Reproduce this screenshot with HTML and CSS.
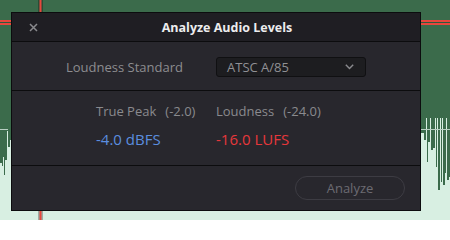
FILE: index.html
```html
<!DOCTYPE html>
<html>
<head>
<meta charset="utf-8">
<link rel="stylesheet" href="styles.css">
</head>
<body>
<svg class="backdrop" width="450" height="220" viewBox="0 0 450 220">
  <rect width="450" height="220" fill="#d8efe2"/>
  <rect width="450" height="118" fill="#3b6b4b"/>
  <g fill="#3b6b4b">
    <rect x="0" y="117" width="2" height="46"/>
    <rect x="2" y="117" width="1" height="49"/>
    <rect x="3" y="117" width="1" height="40"/>
    <rect x="4" y="117" width="1" height="58"/>
    <rect x="5" y="117" width="2" height="43"/>
    <rect x="7" y="117" width="1" height="14"/>
    <rect x="8" y="117" width="2" height="30"/>
    <rect x="10" y="117" width="2" height="23"/>
    <rect x="421" y="117" width="3" height="16"/>
    <rect x="424" y="117" width="2" height="23"/>
    <rect x="427" y="117" width="1" height="45"/>
    <rect x="428" y="117" width="2" height="25"/>
    <rect x="431" y="117" width="2" height="33"/>
    <rect x="433" y="117" width="2" height="31"/>
    <rect x="436" y="117" width="1" height="50"/>
    <rect x="438" y="117" width="2" height="73"/>
    <rect x="441" y="117" width="1" height="65"/>
    <rect x="443" y="117" width="2" height="68"/>
    <rect x="445" y="117" width="1" height="56"/>
    <rect x="447" y="117" width="2" height="63"/>
    <rect x="449" y="117" width="1" height="60"/>
  </g>
  <rect x="0" y="129" width="8" height="1" fill="#b8cfc2"/>
  <rect x="421" y="129" width="29" height="1" fill="#b8cfc2"/>
  <rect x="0" y="22" width="450" height="1" fill="#2f5a3e"/>
  <rect x="0" y="20" width="450" height="2" fill="#e8473d"/>
  <rect x="0" y="23" width="450" height="2" fill="#e8473d"/>
  <rect x="38" y="0" width="5" height="220" fill="#000" opacity="0.28"/>
  <rect x="39.5" y="0" width="2" height="220" fill="#e8473d"/>
</svg>

<div class="dialog">
  <div class="titlebar">
    <div class="close">
      <svg width="9" height="9" viewBox="0 0 9 9"><path d="M1 1 L8 8 M8 1 L1 8" stroke="#8a8a8e" stroke-width="1.5" fill="none"/></svg>
    </div>
    <div class="title">Analyze Audio Levels</div>
    <div class="spacer"></div>
  </div>
  <div class="section standard">
    <div class="label">Loudness Standard</div>
    <div class="select">
      <span>ATSC A/85</span>
      <svg width="9" height="6" viewBox="0 0 9 6"><path d="M0.8 0.8 L4.5 4.6 L8.2 0.8" stroke="#8a8a8e" stroke-width="1.4" fill="none"/></svg>
    </div>
  </div>
  <div class="section levels">
    <div class="metric">
      <div class="mlabel">True Peak<span class="target">(-2.0)</span></div>
      <div class="value peak">-4.0 dBFS</div>
    </div>
    <div class="metric">
      <div class="mlabel">Loudness<span class="target">(-24.0)</span></div>
      <div class="value loud">-16.0 LUFS</div>
    </div>
  </div>
  <div class="footer">
    <div class="button">Analyze</div>
  </div>
</div>
</body>
</html>
```

FILE: styles.css
```css
html, body {
  margin: 0;
  padding: 0;
}
body {
  width: 450px;
  height: 220px;
  overflow: hidden;
  font-family: "Open Sans", "Noto Sans", sans-serif;
  padding: 12px 0 0 11px;
  box-sizing: border-box;
}
.backdrop {
  position: absolute;
  left: 0;
  top: 0;
  display: block;
}
.dialog {
  position: relative;
  width: 410px;
  height: 199px;
  box-sizing: border-box;
  border: 1px solid #0c0c0e;
  background: #28272d;
  display: flex;
  flex-direction: column;
}
.titlebar {
  height: 28px;
  background: #1f1e23;
  border-bottom: 1px solid #0c0c0e;
  display: flex;
  align-items: center;
}
.close {
  width: 40px;
  padding-left: 17px;
  box-sizing: border-box;
  display: flex;
  align-items: center;
  height: 100%;
}
.close svg {
  display: block;
  margin-top: 1px;
}
.title {
  flex: 1;
  text-align: center;
  color: #ececee;
  font-weight: 700;
  font-size: 12.5px;
  line-height: 28px;
  padding-top: 1px;
}
.spacer {
  width: 18px;
}
.section {
  border-bottom: 1px solid #0c0c0e;
}
.standard {
  height: 48px;
  display: grid;
  grid-template-columns: 171px 150px;
  column-gap: 33px;
  align-items: center;
}
.label {
  text-align: right;
  color: #8d8d90;
  font-size: 13px;
  line-height: 18px;
  padding-top: 1px;
}
.select {
  height: 20px;
  box-sizing: border-box;
  margin-top: 1px;
  border: 1px solid #101012;
  border-radius: 3px;
  background: #1d1d20;
  display: flex;
  align-items: center;
  justify-content: space-between;
  padding: 0 11px 0 10px;
  color: #909094;
  font-size: 13px;
}
.select svg {
  display: block;
  margin-top: 1px;
}
.levels {
  height: 75px;
  display: flex;
  padding-left: 84px;
  box-sizing: border-box;
  padding-top: 12px;
}
.metric {
  width: 120px;
  display: flex;
  flex-direction: column;
  gap: 9px;
}
.mlabel {
  color: #8a8a8e;
  font-size: 13px;
  line-height: 17px;
  white-space: nowrap;
}
.target {
  margin-left: 9px;
}
.value {
  font-size: 15px;
  line-height: 20px;
  white-space: nowrap;
}
.peak {
  color: #5b8ddf;
}
.loud {
  color: #e6373b;
}
.footer {
  flex: 1;
  display: flex;
  justify-content: flex-end;
  align-items: flex-start;
  padding: 10px 15px 0 0;
}
.button {
  width: 110px;
  height: 24px;
  box-sizing: border-box;
  border: 1px solid #3d3c43;
  border-radius: 12px;
  color: #6c6b72;
  font-size: 13px;
  line-height: 22px;
  text-align: center;
}
```
